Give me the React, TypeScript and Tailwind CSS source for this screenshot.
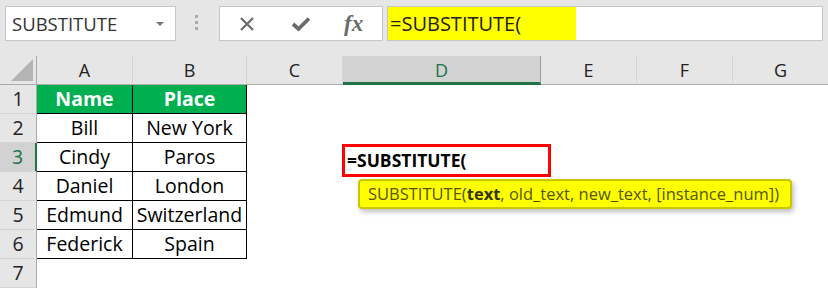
import React from 'react'

const COLS = [
  { label: 'A', w: 'w-[96px]' },
  { label: 'B', w: 'w-[114px]' },
  { label: 'C', w: 'w-[96px]' },
  { label: 'D', w: 'w-[198px]', active: true },
  { label: 'E', w: 'w-[96px]' },
  { label: 'F', w: 'w-[96px]' },
  { label: 'G', w: 'w-[96px]' },
]

const DATA = [
  ['Name', 'Place'],
  ['Bill', 'New York'],
  ['Cindy', 'Paros'],
  ['Daniel', 'London'],
  ['Edmund', 'Switzerland'],
  ['Federick', 'Spain'],
]

const FormulaBar = () => (
  <div className="flex h-[56px] items-start bg-[#e6e6e6] pt-[6px]">
    <div className="ml-[5px] flex h-[35px] w-[171px] items-center justify-between border border-[#c6c6c6] bg-white pl-[6px] pr-[11px]">
      <span className="text-[18.5px] text-[#333]">SUBSTITUTE</span>
      <span className="h-0 w-0 border-x-[4px] border-t-[4px] border-x-transparent border-t-[#777]" />
    </div>

    <div className="ml-[19px] mt-[9px] flex flex-col gap-[3px]">
      <span className="h-[3px] w-[3px] bg-[#aaa]" />
      <span className="h-[3px] w-[3px] bg-[#aaa]" />
      <span className="h-[3px] w-[3px] bg-[#aaa]" />
    </div>

    <div className="ml-[21px] flex h-[35px] w-[164px] items-center border border-[#c6c6c6] bg-white">
      <svg className="ml-[19px]" width="16" height="16" viewBox="0 0 16 16">
        <path d="M2 2 L14 14 M14 2 L2 14" stroke="#6b6b6b" strokeWidth="2.2" />
      </svg>
      <svg className="ml-[36px]" width="20" height="16" viewBox="0 0 20 16">
        <path d="M2 8 L7.5 13 L18 2.5" stroke="#6b6b6b" strokeWidth="3.8" fill="none" />
      </svg>
      <span className="ml-[33px] font-['Liberation_Serif'] text-[23px] font-bold italic leading-none text-[#6b6b6b]">fx</span>
    </div>

    <div className="ml-[4px] flex h-[35px] w-[436px] border border-[#c6c6c6] bg-white">
      <div className="flex h-full w-[188px] items-center bg-[#ffff00] pl-[2px] text-[20px] text-[#222]">
        =SUBSTITUTE(
      </div>
    </div>
  </div>
)

const HeaderRow = () => (
  <div className="flex h-[29px] bg-[#e6e6e6]">
    <div className="relative w-[37px] shrink-0 border-b border-r border-[#ababab]">
      <div className="absolute bottom-[3px] right-[3px] h-0 w-0 border-b-[22px] border-l-[22px] border-b-[#b4b4b4] border-l-transparent" />
    </div>
    {COLS.map(c => (
      <div
        key={c.label}
        className={`${c.w} flex shrink-0 items-center justify-center border-r text-[18px] text-[#222] ${
          c.active
            ? 'border-b-[3px] border-r-[#9b9b9b] border-b-[#217346] bg-[#d2d2d2] pt-[3px] text-[#217346]'
            : 'border-b border-r-[#d4d4d4] border-b-[#ababab]'
        }`}
      >
        {c.label}
      </div>
    ))}
  </div>
)

export default function App() {
  const rows = [...DATA, null]

  return (
    <div className="relative h-[289px] w-[828px] overflow-hidden bg-white font-['Open_Sans',sans-serif]">
      <FormulaBar />
      <HeaderRow />

      {rows.map((r, i) => {
        const isHead = i === 0
        const isActive = i === 2
        return (
          <div key={i} className="flex h-[29px]">
            <div
              className={`flex w-[37px] shrink-0 items-center justify-center border-b border-b-[#d4d4d4] text-[19.5px] ${
                isActive
                  ? 'border-r-[2px] border-r-[#217346] bg-[#d2d2d2] text-[#217346]'
                  : 'border-r border-r-[#ababab] bg-[#e6e6e6] text-[#222]'
              }`}
            >
              {i + 1}
            </div>
            {r &&
              r.map((v, j) => (
                <div
                  key={j}
                  className={`flex shrink-0 items-center justify-center border-b border-r border-black text-[19.5px] ${
                    j === 0 ? 'w-[96px]' : 'w-[114px]'
                  } ${isHead ? 'bg-[#00b050] font-bold text-white' : 'text-black'}`}
                >
                  {v}
                </div>
              ))}
          </div>
        )
      })}

      {/* cell in edit mode */}
      <div className="absolute left-[342px] top-[144px] flex h-[33px] w-[209px] items-center border-[3px] border-[#ff0000] bg-white pl-[2px] text-[17.5px] font-bold text-black">
        =SUBSTITUTE(
      </div>

      {/* function tooltip */}
      <div className="absolute left-[358px] top-[179px] flex h-[30px] w-[434px] items-center rounded-[4px] border-2 border-[#c8c800] bg-[#ffff00] pl-[8px] text-[16.5px] text-[#555500] shadow-[2px_3px_5px_rgba(0,0,0,0.25)]">
        SUBSTITUTE(<b className="text-[#333300]">text</b>, old_text, new_text, [instance_num])
      </div>
    </div>
  )
}
